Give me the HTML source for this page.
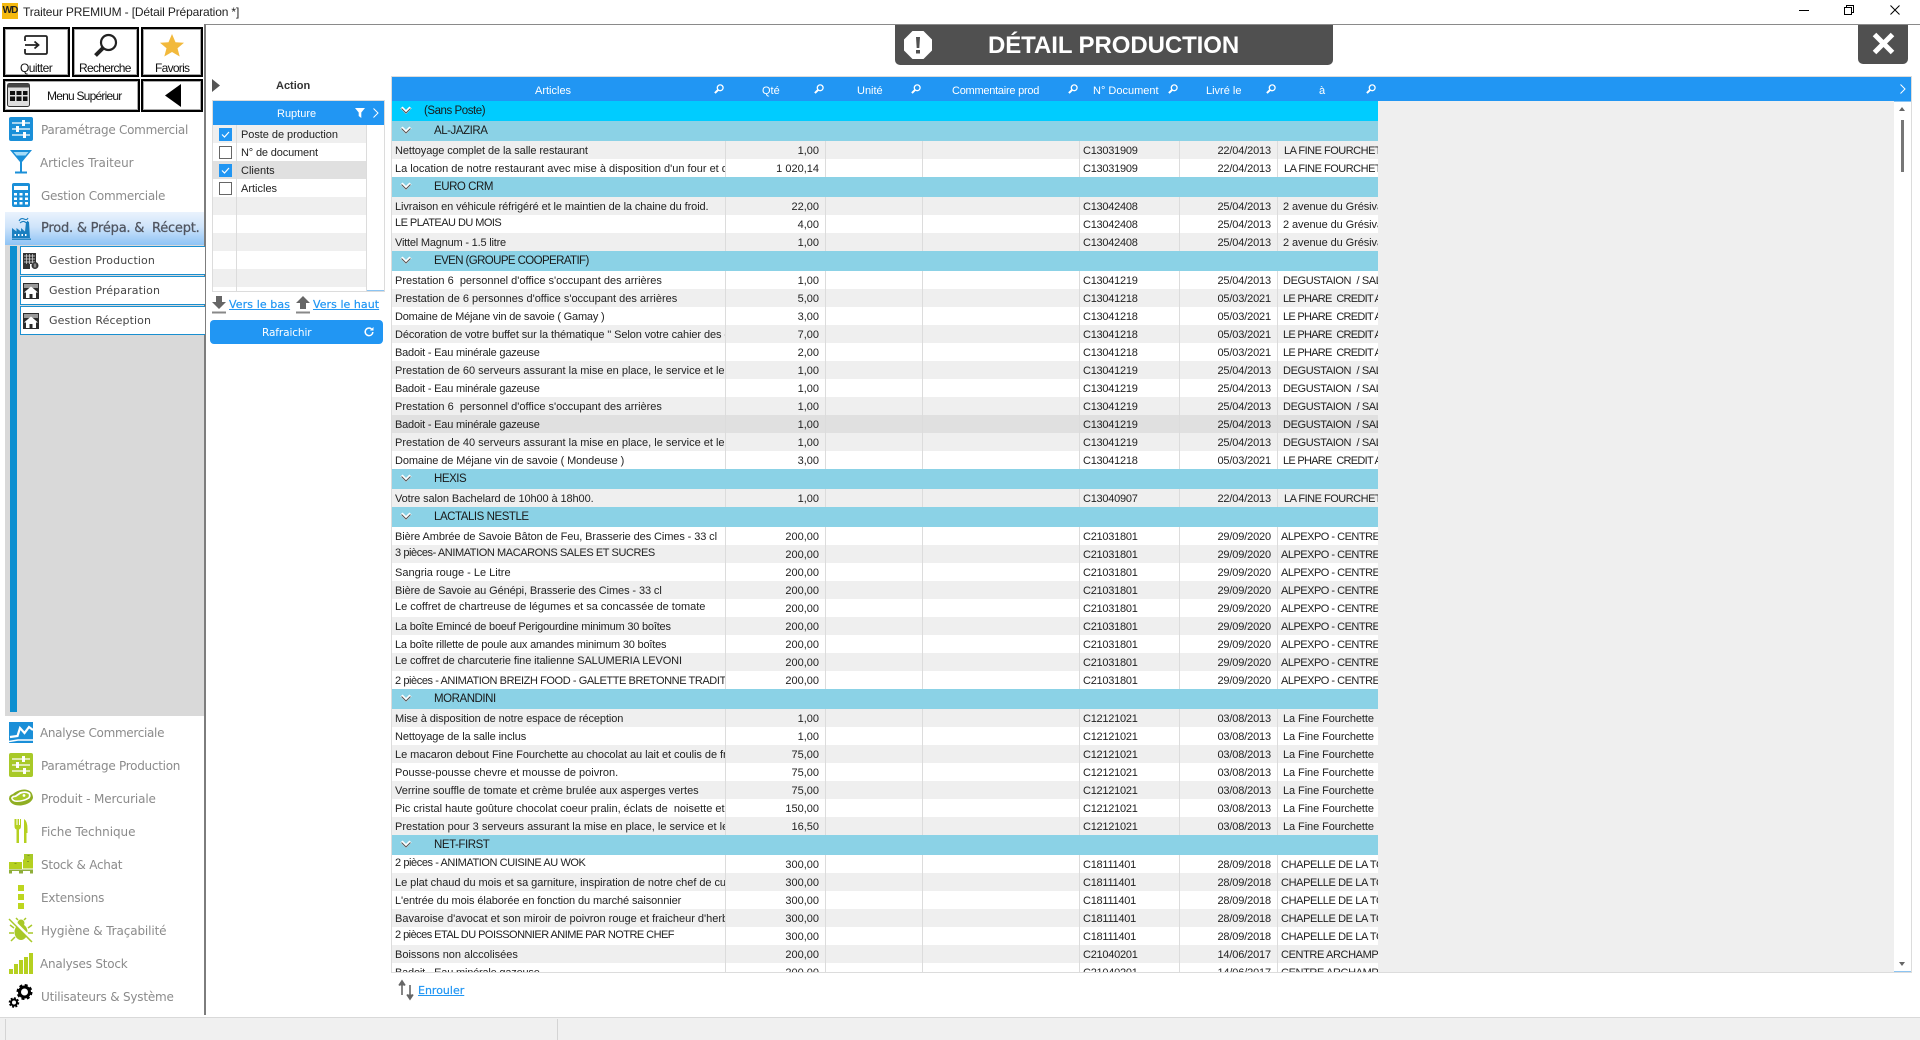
<!DOCTYPE html>
<html lang="fr">
<head>
<meta charset="utf-8">
<title>Traiteur PREMIUM - [Détail Préparation *]</title>
<style>
html,body{margin:0;padding:0;background:#fff;width:1920px;height:1040px;overflow:hidden}
body{position:relative;font-family:"Liberation Sans",sans-serif;font-size:11px;color:#222}
.a{position:absolute}
.t{position:absolute;white-space:pre;line-height:16px}
svg{position:absolute;display:block;overflow:visible}
.btn{position:absolute;box-sizing:border-box;border:2px solid #000;background:#fff;outline:1px solid #aaa;outline-offset:-3px}
.lbl{font-size:12px;color:#111;letter-spacing:-.55px}
.m{position:absolute;left:41px;font-family:"DejaVu Sans",sans-serif;font-size:12px;line-height:18px;color:#8b8b8b;white-space:pre;letter-spacing:-.1px}
.sub{position:absolute;left:20px;width:184px;height:27px;box-sizing:content-box;background:#fff;border:solid #1a8fd0;border-width:1px 0 1px 1px}
.sub span{position:absolute;left:28px;top:6px;font-family:"DejaVu Sans",sans-serif;font-size:11px;line-height:16px;color:#444;white-space:pre;letter-spacing:.1px}
#grid{position:absolute;left:392px;top:101px;width:1502px;height:871px;background:#efefef;overflow:hidden}
.g0,.g1{height:20px;line-height:20px;font-size:11.5px;position:relative;width:986px;white-space:pre;color:#1a1a1a;letter-spacing:-.45px}
.g0{background:#00ccff}
.g1{background:#8bd2e6}
.g0 span{position:absolute;left:32px;top:0}
.g1 span{position:absolute;left:42px;top:0}
.g0 svg,.g1 svg{left:8px;top:5px}
.r{display:flex;height:18px;width:986px;background:#fff;line-height:20px;font-size:11px;color:#222}
.r.s{background:#efefef}
.r.x{background:#e0e0e0}
.r div{box-sizing:border-box;height:18px;overflow:hidden;white-space:pre;border-right:1px solid #dcdcdc}
.c1{width:334px;padding:0 4px 0 3px}
.c2{width:100px;padding-right:6px;text-align:right}
.c3{width:97px}
.c4{width:157px}
.c5{width:100px;padding-left:3px;letter-spacing:-.25px}
.c6{width:98px;padding-right:6px;text-align:right;letter-spacing:-.15px}
.c7{width:100px;padding:0 2px 0 5px;border-right:0!important;letter-spacing:-.5px}
.c7.n{letter-spacing:-.08px}
.c7.d{letter-spacing:-.38px}
.c7.f{letter-spacing:-.72px}
.c7.p3{padding-left:3px}
.c7.p6{padding-left:6px}
.r .u{line-height:16px}
.l0{letter-spacing:-.05px}
.l1{letter-spacing:-.1px}
.l2{letter-spacing:-.2px}
.l3{letter-spacing:-.3px}
.l4{letter-spacing:-.42px}
.l5{letter-spacing:-.54px}
.h{position:absolute;top:83px;color:#fff;font-size:11px;line-height:16px;white-space:pre}
.rl{position:absolute;left:241px;font-size:11px;line-height:20px;white-space:pre;color:#222}
.lk{position:absolute;font-family:"DejaVu Sans",sans-serif;font-size:11px;line-height:15px;color:#2196f3;text-decoration:underline;white-space:pre;-webkit-text-stroke:.2px #2196f3}
</style>
</head>
<body>
<svg width="0" height="0" style="position:absolute">
<defs>
<symbol id="lens" viewBox="0 0 10 10"><circle cx="6.2" cy="3.8" r="2.9" fill="none" stroke="#fff" stroke-width="1.3"/><path d="M4 6 L.9 9.1" stroke="#fff" stroke-width="2"/></symbol>
<symbol id="chev" viewBox="0 0 12 9"><path d="M1.5 1.5 L6 6 L10.5 1.5" fill="none" stroke="#fff" stroke-width="3"/><path d="M1.5 2.5 L6 7 L10.5 2.5" fill="none" stroke="#555" stroke-width="1"/></symbol>
<symbol id="sl" viewBox="0 0 24 24"><path d="M3 6h18M3 12h18M3 18h18" stroke="#fff" stroke-width="1.3"/><path d="M13 3h3v6h-3zM7 9h3v6H7zM14 15h3v6h-3z" fill="#fff"/></symbol>
<symbol id="home" viewBox="0 0 16 16"><rect width="16" height="16" fill="#2c2c2c"/><rect x="1" y="1" width="14" height="4" fill="#9a9a9a"/><path d="M8 3.500 L15 9.500 H13 V15 H9.500 V11 H6.500 V15 H3 V9.500 H1z" fill="#fff"/></symbol>
</defs>
</svg>

<!-- title bar -->
<div class="a" style="left:2px;top:3px;width:16px;height:16px;background:#f5b90f"></div>
<div class="t" style="left:2px;top:4px;width:16px;text-align:center;font-size:10px;font-weight:bold;color:#222;line-height:14px;letter-spacing:-1px">WD</div>
<div class="t" style="left:23px;top:4px;font-size:12px;color:#222;letter-spacing:-.15px">Traiteur PREMIUM - [Détail Préparation *]</div>
<svg style="left:1799px;top:10px" width="10" height="1"><path d="M0 .5H10" stroke="#000"/></svg>
<svg style="left:1844px;top:5px" width="10" height="10"><path d="M2.5 2.5V.5H9.5V7.5H7.5M.5 2.5H7.5V9.5H.5Z" fill="none" stroke="#000"/></svg>
<svg style="left:1890px;top:5px" width="10" height="10"><path d="M.5 .5L9.5 9.5M9.5 .5L.5 9.5" stroke="#000"/></svg>

<!-- frame lines -->
<div class="a" style="left:204px;top:24px;width:1716px;height:1px;background:#8a8a8a"></div>
<div class="a" style="left:204px;top:24px;width:2px;height:991px;background:#7d7d7d"></div>

<!-- top buttons -->
<div class="btn" style="left:3px;top:27px;width:67px;height:50px"></div>
<svg style="left:24px;top:35px" width="24" height="20" viewBox="0 0 24 20"><path d="M1 6V2.5Q1 1 2.5 1H21.500Q23 1 23 2.500V17.500Q23 19 21.500 19H2.500Q1 19 1 17.500V14" fill="none" stroke="#222" stroke-width="1.800"/><path d="M1 10H14M10.500 6.500L14.500 10L10.500 13.500" fill="none" stroke="#222" stroke-width="1.800"/></svg>
<div class="t lbl" style="left:20px;top:60px">Quitter</div>
<div class="btn" style="left:72px;top:27px;width:67px;height:50px"></div>
<svg style="left:93px;top:33px" width="25" height="25" viewBox="0 0 25 25"><circle cx="15.500" cy="9.500" r="7.500" fill="none" stroke="#222" stroke-width="2.200"/><path d="M10 15L2.500 22.500" stroke="#222" stroke-width="4"/></svg>
<div class="t lbl" style="left:79px;top:60px;letter-spacing:-.7px">Recherche</div>
<div class="btn" style="left:141px;top:27px;width:62px;height:50px"></div>
<svg style="left:159px;top:33px" width="26" height="25" viewBox="0 0 26 25"><path d="M13 1L16.500 9.200L25 9.800L18.500 15.200L20.700 23.500L13 19L5.300 23.500L7.500 15.200L1 9.800L9.500 9.200Z" fill="#f2b93c"/></svg>
<div class="t lbl" style="left:155px;top:60px;letter-spacing:-.72px">Favoris</div>
<div class="btn" style="left:3px;top:79px;width:137px;height:33px"></div>
<svg style="left:7px;top:83px" width="23" height="24" viewBox="0 0 23 24"><rect x=".5" y=".5" width="22" height="23" rx="2" fill="#ddd" stroke="#333"/><rect x=".5" y=".5" width="22" height="4" fill="#444"/><path d="M3 8h5v4H3zM9.500 8h5v4h-5zM16 8h4.500v4H16zM3 13.500h5v4.500H3zM9.500 13.500h5v4.500h-5zM16 13.500h4.500v4.500H16z" fill="#111"/></svg>
<div class="t lbl" style="left:47px;top:88px;letter-spacing:-.78px">Menu Supérieur</div>
<div class="btn" style="left:141px;top:79px;width:62px;height:33px"></div>
<svg style="left:165px;top:84px" width="17" height="24"><path d="M16 0V23L0 11.500Z" fill="#000"/></svg>

<!-- sidebar menu -->
<svg style="left:9px;top:117px" width="24" height="24"><rect width="24" height="24" rx="2" fill="#1a8fd8"/><use href="#sl" width="24" height="24"/></svg>
<div class="m" style="top:121px;letter-spacing:-.27px">Paramétrage Commercial</div>
<svg style="left:10px;top:150px" width="22" height="24" viewBox="0 0 22 24"><path d="M0 0H22L12 12V21.500H17V23.500H5V21.500H10V12Z" fill="#1a8fd8"/><path d="M3.500 2H18.500L15.500 5.500H6.500Z" fill="#a5dcf8"/></svg>
<div class="m" style="top:154px;left:40px;letter-spacing:-.05px">Articles Traiteur</div>
<svg style="left:12px;top:183px" width="18" height="24" viewBox="0 0 18 24"><rect width="18" height="24" rx="2" fill="#1a8fd8"/><rect x="2" y="3" width="14" height="4" fill="#fff"/><path d="M2 10h3v2.500H2zM7.500 10h3v2.500h-3zM13 10h3v2.500h-3zM2 14.500h3V17H2zM7.500 14.500h3V17h-3zM13 14.500h3V17h-3zM2 19h3v2.500H2zM7.500 19h3v2.500h-3zM13 19h3v2.500h-3z" fill="#fff"/></svg>
<div class="m" style="top:187px;letter-spacing:-.25px">Gestion Commerciale</div>

<div class="a" style="left:5px;top:212px;width:199px;height:33px;background:linear-gradient(#eaf3fd,#cfe4fa 45%,#8ec3f5)"></div>
<svg style="left:12px;top:216px" width="19" height="24" viewBox="0 0 19 24"><path d="M0 22V12L4.500 15.500V12L9 15.500V12L13 15.500L14 6H17L18 22Z" fill="#1a7fc0"/><path d="M7 5Q9 1.500 12 3T16 2M8 7Q11 4.500 13 6T16 5" fill="none" stroke="#1a7fc0" stroke-width="1.100"/><path d="M2.500 18h1.500v2H2.500zM6 18h1.500v2H6zM9.500 18H11v2H9.500zM13 18h1.500v2H13z" fill="#fff"/><path d="M0 23.200H19" stroke="#1a7fc0" stroke-width="1.400"/></svg>
<div class="m" style="top:220px;color:#505560;font-size:13px;-webkit-text-stroke:.25px #505560;letter-spacing:-.22px;">Prod. &amp; Prépa. &amp;  Récept.</div>

<div class="a" style="left:5px;top:245px;width:199px;height:471px;background:#d9d9d9"></div>
<div class="a" style="left:10px;top:246px;width:7px;height:466px;background:#0d8fd0"></div>
<div class="sub" style="top:246px"><svg style="left:2px;top:6px" width="16" height="16" viewBox="0 0 16 16"><rect width="13" height="11" fill="#333"/><path d="M1 3h11M1 6h11M1 9h11M3.500 1v10M6.500 1v10M9.500 1v10" stroke="#ddd" stroke-width=".7"/><rect y="11" width="7" height="5" fill="#333"/><circle cx="12" cy="12.500" r="3.500" fill="#333"/><path d="M11.200 10.500v4M12.800 10.500v4" stroke="#ccc" stroke-width=".7"/></svg><span>Gestion Production</span></div>
<div class="sub" style="top:276px"><svg style="left:2px;top:6px" width="16" height="16"><use href="#home" width="16" height="16"/></svg><span>Gestion Préparation</span></div>
<div class="sub" style="top:306px"><svg style="left:2px;top:6px" width="16" height="16"><use href="#home" width="16" height="16"/></svg><span>Gestion Réception</span></div>

<svg style="left:9px;top:722px" width="24" height="21" viewBox="0 0 24 21"><rect width="24" height="21" fill="#1a8fd8"/><path d="M1 15L8.500 14L11 6L15.500 11L20 5L24 8" fill="none" stroke="#fff" stroke-width="2.200"/><path d="M0 19.500L9 18H24" fill="none" stroke="#fff" stroke-width="1.500"/></svg>
<div class="m" style="top:724px;left:40px;letter-spacing:-.32px">Analyse Commerciale</div>
<svg style="left:9px;top:753px" width="24" height="24"><rect width="24" height="24" rx="2" fill="#a8c928"/><use href="#sl" width="24" height="24"/></svg>
<div class="m" style="top:757px;letter-spacing:-.27px">Paramétrage Production</div>
<svg style="left:9px;top:789px" width="24" height="17" viewBox="0 0 24 17"><path d="M0 10Q0 6 4 5Q6 3 10 1.500Q17 -1 22 3Q24 6 24 9Q22 15 12 16.500Q2 17 0 10Z" fill="#8fae22"/><path d="M2 9Q3 6.500 6 6.500L11 3Q17 1 21 4Q22.500 7 20.500 9.500Q15 13 8 13Q3 13 2 9Z" fill="#fff"/><path d="M3.500 9Q5 8 7 8L11.500 5Q16 3 19.500 5Q20.500 7 19 8.500Q14 11.500 8 11.500Q4.500 11.500 3.500 9Z" fill="#a8c928"/><circle cx="15" cy="6.500" r="1.400" fill="#fff"/></svg>
<div class="m" style="top:790px;letter-spacing:-.12px">Produit - Mercuriale</div>
<svg style="left:14px;top:819px" width="14" height="24" viewBox="0 0 14 24"><path d="M.5 0V7Q.5 10 2.500 10.500V24H5V10.500Q7 10 7 7V0H6V6H5V0H3.500V6H2.500V0Z" fill="#b5d020"/><path d="M10 24V0Q13.500 2 13.500 10V14H12.500V24Z" fill="#b5d020"/></svg>
<div class="m" style="top:823px;letter-spacing:-.05px">Fiche Technique</div>
<svg style="left:9px;top:854px" width="24" height="20" viewBox="0 0 24 20"><rect x="15" y="0" width="9" height="6" fill="#a8c928"/><rect x="14" y="5.500" width="10" height="9" fill="#b5d020"/><rect x="0" y="8" width="13" height="7" fill="#b5d020"/><rect x="0" y="15.500" width="24" height="1.500" fill="#8fae3a"/><path d="M0 17h3v2.500H0zM10 17h4v2.500h-4zM21 17h3v2.500h-3z" fill="#8fae3a"/><path d="M5.500 9h2v1h-2zM18 7h2v1h-2zM18.500 1h2v1h-2z" fill="#7f9a20"/></svg>
<div class="m" style="top:856px;letter-spacing:-.25px">Stock &amp; Achat</div>
<div class="a" style="left:18px;top:885px;width:6px;height:6px;background:#bdd61f"></div>
<div class="a" style="left:18px;top:894px;width:6px;height:6px;background:#bdd61f"></div>
<div class="a" style="left:18px;top:903px;width:6px;height:6px;background:#bdd61f"></div>
<div class="m" style="top:889px;letter-spacing:-.2px">Extensions</div>
<svg style="left:9px;top:918px" width="24" height="24" viewBox="0 0 24 24"><ellipse cx="12" cy="14" rx="6.500" ry="8" fill="#a8c928"/><circle cx="12" cy="5" r="3.500" fill="#a8c928"/><path d="M5 10L1 7M5 15H0M6 19L2 23M19 10L23 7M19 15H24M18 19L22 23M9 2L7 0M15 2L17 0" stroke="#a8c928" stroke-width="1.500"/><path d="M1 0L24 23" stroke="#fff" stroke-width="3.500"/><path d="M0 1L23 24" stroke="#a8c928" stroke-width="1.500"/></svg>
<div class="m" style="top:922px;letter-spacing:-.12px">Hygiène &amp; Traçabilité</div>
<svg style="left:9px;top:953px" width="24" height="21"><path d="M0 16h4v5H0zM5 11h4v10H5zM10 7h4v14h-4zM15 4h4v17h-4zM20 0h4v21h-4z" fill="#b5d020"/></svg>
<div class="m" style="top:955px;left:40px;letter-spacing:-.22px">Analyses Stock</div>
<svg style="left:9px;top:984px" width="24" height="24" viewBox="0 0 24 24"><circle cx="15.500" cy="8" r="5" fill="none" stroke="#000" stroke-width="3"/><circle cx="15.500" cy="8" r="7" fill="none" stroke="#000" stroke-width="2" stroke-dasharray="3 2.500"/><circle cx="5" cy="18.500" r="3" fill="none" stroke="#000" stroke-width="2"/><circle cx="5" cy="18.500" r="4.500" fill="none" stroke="#000" stroke-width="1.500" stroke-dasharray="2 1.500"/></svg>
<div class="m" style="top:988px;letter-spacing:-.2px">Utilisateurs &amp; Système</div>

<!-- title banner -->
<div class="a" style="left:895px;top:25px;width:438px;height:40px;background:#505050;border-radius:0 0 5px 5px"></div>
<svg style="left:904px;top:31px" width="28" height="28" viewBox="0 0 28 28"><path d="M8.500 0H19.500L28 8.500V19.500L19.500 28H8.500L0 19.500V8.500Z" fill="#fff"/><path d="M12 6H16L15.300 17H12.700Z" fill="#505050"/><rect x="12" y="19" width="4" height="3.500" fill="#505050"/></svg>
<div class="t" style="left:988px;top:31px;color:#fff;font-weight:bold;font-size:24px;line-height:29px;letter-spacing:-.08px">DÉTAIL PRODUCTION</div>
<div class="a" style="left:1858px;top:25px;width:50px;height:39px;background:#505050;border-radius:0 0 5px 5px"></div>
<svg style="left:1872px;top:32px" width="23" height="23"><path d="M2.500 2.500L20.500 20.500M20.500 2.500L2.500 20.500" stroke="#fff" stroke-width="5"/></svg>

<!-- action panel -->
<svg style="left:212px;top:79px" width="8" height="13"><path d="M0 0L8 6.500L0 13Z" fill="#555"/></svg>
<div class="t" style="left:276px;top:78px;font-weight:bold;font-size:11px;color:#333">Action</div>
<div class="a" style="left:212px;top:100px;width:173px;height:192px;box-sizing:border-box;border:1px solid #dcdcdc;background:#fff"></div>
<div class="a" style="left:213px;top:101px;width:171px;height:24px;background:#2196f3"></div>
<div class="t" style="left:277px;top:106px;color:#fff;font-size:11px">Rupture</div>
<svg style="left:355px;top:108px" width="10" height="10"><path d="M0 0H10L6.300 4.500V10L3.700 8V4.500Z" fill="#fff"/></svg>
<svg style="left:373px;top:108px" width="6" height="10"><path d="M.5 .5L5 5L.5 9.500" fill="none" stroke="#fff"/></svg>
<div class="a" style="left:213px;top:125px;width:153px;height:18px;background:#efefef"></div>
<div class="a" style="left:213px;top:161px;width:153px;height:18px;background:#e0e0e0"></div>
<div class="a" style="left:213px;top:197px;width:153px;height:18px;background:#efefef"></div>
<div class="a" style="left:213px;top:233px;width:153px;height:18px;background:#efefef"></div>
<div class="a" style="left:213px;top:269px;width:153px;height:18px;background:#efefef"></div>
<div class="a" style="left:236px;top:125px;width:1px;height:166px;background:#dcdcdc"></div>
<div class="a" style="left:366px;top:125px;width:1px;height:166px;background:#dcdcdc"></div>
<div class="a" style="left:367px;top:290px;width:17px;height:1px;background:#8cc4f2"></div>
<div class="a" style="left:219px;top:128px;width:13px;height:13px;background:#2196f3"></div>
<svg style="left:219px;top:128px" width="13" height="13"><path d="M3 6.500L5.500 9L10 4" fill="none" stroke="#fff" stroke-width="1.200"/></svg>
<div class="a" style="left:219px;top:146px;width:13px;height:13px;box-sizing:border-box;border:1px solid #666;background:#fff"></div>
<div class="a" style="left:219px;top:164px;width:13px;height:13px;background:#2196f3"></div>
<svg style="left:219px;top:164px" width="13" height="13"><path d="M3 6.500L5.500 9L10 4" fill="none" stroke="#fff" stroke-width="1.200"/></svg>
<div class="a" style="left:219px;top:182px;width:13px;height:13px;box-sizing:border-box;border:1px solid #666;background:#fff"></div>
<div class="rl" style="top:125px;letter-spacing:-.05px">Poste de production</div>
<div class="rl" style="top:143px;letter-spacing:-.15px">N° de document</div>
<div class="rl" style="top:161px">Clients</div>
<div class="rl" style="top:179px">Articles</div>

<svg style="left:212px;top:296px" width="14" height="18" viewBox="0 0 14 18"><path d="M4 0H10V6H14L7 13L0 6H4Z" fill="#666"/><rect y="15.500" width="14" height="2" fill="#888"/></svg>
<div class="lk" style="left:229px;top:297px;letter-spacing:.1px">Vers le bas</div>
<svg style="left:296px;top:296px" width="14" height="18" viewBox="0 0 14 18"><path d="M4 13H10V7H14L7 0L0 7H4Z" fill="#666"/><rect y="15.500" width="14" height="2" fill="#888"/></svg>
<div class="lk" style="left:313px;top:297px;letter-spacing:.05px">Vers le haut</div>
<div class="a" style="left:210px;top:320px;width:173px;height:24px;border-radius:4px;background:#2196f3"></div>
<div class="t" style="left:262px;top:325px;color:#fff;font-family:'DejaVu Sans',sans-serif;font-size:10.5px;letter-spacing:-.1px">Rafraichir</div>
<svg style="left:364px;top:327px" width="10" height="10" viewBox="0 0 10 10"><path d="M8.800 5A3.800 3.800 0 1 1 7.500 2" fill="none" stroke="#fff" stroke-width="1.500"/><path d="M6 3.500H9.500V0Z" fill="#fff"/></svg>

<!-- grid frame -->
<div class="a" style="left:391px;top:76px;width:1521px;height:897px;box-sizing:border-box;border:1px solid #dcdcdc;background:#fff"></div>
<div class="a" style="left:392px;top:77px;width:1519px;height:24px;background:#2196f3"></div>
<div class="h" style="left:535px">Articles</div>
<div class="h" style="left:762px">Qté</div>
<div class="h" style="left:857px">Unité</div>
<div class="h" style="left:952px;letter-spacing:-.25px">Commentaire prod</div>
<div class="h" style="left:1093px">N° Document</div>
<div class="h" style="left:1206px">Livré le</div>
<div class="h" style="left:1319px">à</div>
<svg style="left:714px;top:84px" width="10" height="10"><use href="#lens" width="10" height="10"/></svg>
<svg style="left:814px;top:84px" width="10" height="10"><use href="#lens" width="10" height="10"/></svg>
<svg style="left:911px;top:84px" width="10" height="10"><use href="#lens" width="10" height="10"/></svg>
<svg style="left:1068px;top:84px" width="10" height="10"><use href="#lens" width="10" height="10"/></svg>
<svg style="left:1168px;top:84px" width="10" height="10"><use href="#lens" width="10" height="10"/></svg>
<svg style="left:1266px;top:84px" width="10" height="10"><use href="#lens" width="10" height="10"/></svg>
<svg style="left:1366px;top:84px" width="10" height="10"><use href="#lens" width="10" height="10"/></svg>
<svg style="left:1900px;top:84px" width="6" height="10"><path d="M.5 .5L5 5L.5 9.500" fill="none" stroke="#fff"/></svg>

<!-- scrollbar -->
<div class="a" style="left:1894px;top:101px;width:17px;height:1px;background:#8cc4f2"></div>
<svg style="left:1899px;top:107px" width="6" height="4"><path d="M3 0L6 4H0Z" fill="#666"/></svg>
<div class="a" style="left:1901px;top:120px;width:3px;height:52px;background:#777"></div>
<svg style="left:1899px;top:962px" width="6" height="4"><path d="M0 0H6L3 4Z" fill="#666"/></svg>
<div class="a" style="left:1894px;top:971px;width:17px;height:1px;background:#8cc4f2"></div>

<div id="grid">
<div class="g0"><svg width="12" height="9"><use href="#chev" width="12" height="9"/></svg><span>(Sans Poste)</span></div>
<div class="g1"><svg width="12" height="9"><use href="#chev" width="12" height="9"/></svg><span>AL-JAZIRA</span></div>
<div class="r s"><div class="c1 l1">Nettoyage complet de la salle restaurant</div><div class="c2">1,00</div><div class="c3"></div><div class="c4"></div><div class="c5">C13031909</div><div class="c6">22/04/2013</div><div class="c7 p6">LA FINE FOURCHETTE</div></div>
<div class="r"><div class="c1">La location de notre restaurant avec mise à disposition d'un four et de</div><div class="c2">1 020,14</div><div class="c3"></div><div class="c4"></div><div class="c5">C13031909</div><div class="c6">22/04/2013</div><div class="c7 p6">LA FINE FOURCHETTE</div></div>
<div class="g1"><svg width="12" height="9"><use href="#chev" width="12" height="9"/></svg><span>EURO CRM</span></div>
<div class="r s"><div class="c1 l1">Livraison en véhicule réfrigéré et le maintien de la chaine du froid.</div><div class="c2">22,00</div><div class="c3"></div><div class="c4"></div><div class="c5">C13042408</div><div class="c6">25/04/2013</div><div class="c7 n">2 avenue du Grésivaudan</div></div>
<div class="r"><div class="c1 u l5">LE PLATEAU DU MOIS</div><div class="c2">4,00</div><div class="c3"></div><div class="c4"></div><div class="c5">C13042408</div><div class="c6">25/04/2013</div><div class="c7 n">2 avenue du Grésivaudan</div></div>
<div class="r s"><div class="c1 l2">Vittel Magnum - 1.5 litre</div><div class="c2">1,00</div><div class="c3"></div><div class="c4"></div><div class="c5">C13042408</div><div class="c6">25/04/2013</div><div class="c7 n">2 avenue du Grésivaudan</div></div>
<div class="g1"><svg width="12" height="9"><use href="#chev" width="12" height="9"/></svg><span style="letter-spacing:-.6px">EVEN (GROUPE COOPERATIF)</span></div>
<div class="r"><div class="c1">Prestation 6  personnel d'office s'occupant des arrières</div><div class="c2">1,00</div><div class="c3"></div><div class="c4"></div><div class="c5">C13041219</div><div class="c6">25/04/2013</div><div class="c7 d">DEGUSTAION  / SALON</div></div>
<div class="r s"><div class="c1">Prestation de 6 personnes d'office s'occupant des arrières</div><div class="c2">5,00</div><div class="c3"></div><div class="c4"></div><div class="c5">C13041218</div><div class="c6">05/03/2021</div><div class="c7 f">LE PHARE  CREDIT AGRICOLE</div></div>
<div class="r"><div class="c1 l2">Domaine de Méjane vin de savoie ( Gamay )</div><div class="c2">3,00</div><div class="c3"></div><div class="c4"></div><div class="c5">C13041218</div><div class="c6">05/03/2021</div><div class="c7 f">LE PHARE  CREDIT AGRICOLE</div></div>
<div class="r s"><div class="c1 l1">Décoration de votre buffet sur la thématique " Selon votre cahier des charges</div><div class="c2">7,00</div><div class="c3"></div><div class="c4"></div><div class="c5">C13041218</div><div class="c6">05/03/2021</div><div class="c7 f">LE PHARE  CREDIT AGRICOLE</div></div>
<div class="r"><div class="c1 l2">Badoit - Eau minérale gazeuse</div><div class="c2">2,00</div><div class="c3"></div><div class="c4"></div><div class="c5">C13041218</div><div class="c6">05/03/2021</div><div class="c7 f">LE PHARE  CREDIT AGRICOLE</div></div>
<div class="r s"><div class="c1">Prestation de 60 serveurs assurant la mise en place, le service et le</div><div class="c2">1,00</div><div class="c3"></div><div class="c4"></div><div class="c5">C13041219</div><div class="c6">25/04/2013</div><div class="c7 d">DEGUSTAION  / SALON</div></div>
<div class="r"><div class="c1 l2">Badoit - Eau minérale gazeuse</div><div class="c2">1,00</div><div class="c3"></div><div class="c4"></div><div class="c5">C13041219</div><div class="c6">25/04/2013</div><div class="c7 d">DEGUSTAION  / SALON</div></div>
<div class="r s"><div class="c1">Prestation 6  personnel d'office s'occupant des arrières</div><div class="c2">1,00</div><div class="c3"></div><div class="c4"></div><div class="c5">C13041219</div><div class="c6">25/04/2013</div><div class="c7 d">DEGUSTAION  / SALON</div></div>
<div class="r x"><div class="c1 l2">Badoit - Eau minérale gazeuse</div><div class="c2">1,00</div><div class="c3"></div><div class="c4"></div><div class="c5">C13041219</div><div class="c6">25/04/2013</div><div class="c7 d">DEGUSTAION  / SALON</div></div>
<div class="r s"><div class="c1">Prestation de 40 serveurs assurant la mise en place, le service et le</div><div class="c2">1,00</div><div class="c3"></div><div class="c4"></div><div class="c5">C13041219</div><div class="c6">25/04/2013</div><div class="c7 d">DEGUSTAION  / SALON</div></div>
<div class="r"><div class="c1 l1">Domaine de Méjane vin de savoie ( Mondeuse )</div><div class="c2">3,00</div><div class="c3"></div><div class="c4"></div><div class="c5">C13041218</div><div class="c6">05/03/2021</div><div class="c7 f">LE PHARE  CREDIT AGRICOLE</div></div>
<div class="g1"><svg width="12" height="9"><use href="#chev" width="12" height="9"/></svg><span>HEXIS</span></div>
<div class="r s"><div class="c1 l1">Votre salon Bachelard de 10h00 à 18h00.</div><div class="c2">1,00</div><div class="c3"></div><div class="c4"></div><div class="c5">C13040907</div><div class="c6">22/04/2013</div><div class="c7 p6">LA FINE FOURCHETTE</div></div>
<div class="g1"><svg width="12" height="9"><use href="#chev" width="12" height="9"/></svg><span>LACTALIS NESTLE</span></div>
<div class="r"><div class="c1 l1">Bière Ambrée de Savoie Bâton de Feu, Brasserie des Cimes - 33 cl</div><div class="c2">200,00</div><div class="c3"></div><div class="c4"></div><div class="c5">C21031801</div><div class="c6">29/09/2020</div><div class="c7 p3">ALPEXPO - CENTRE</div></div>
<div class="r s"><div class="c1 u l4">3 pièces- ANIMATION MACARONS SALES ET SUCRES</div><div class="c2">200,00</div><div class="c3"></div><div class="c4"></div><div class="c5">C21031801</div><div class="c6">29/09/2020</div><div class="c7 p3">ALPEXPO - CENTRE</div></div>
<div class="r"><div class="c1">Sangria rouge - Le Litre</div><div class="c2">200,00</div><div class="c3"></div><div class="c4"></div><div class="c5">C21031801</div><div class="c6">29/09/2020</div><div class="c7 p3">ALPEXPO - CENTRE</div></div>
<div class="r s"><div class="c1 l1">Bière de Savoie au Génépi, Brasserie des Cimes - 33 cl</div><div class="c2">200,00</div><div class="c3"></div><div class="c4"></div><div class="c5">C21031801</div><div class="c6">29/09/2020</div><div class="c7 p3">ALPEXPO - CENTRE</div></div>
<div class="r"><div class="c1 u">Le coffret de chartreuse de légumes et sa concassée de tomate</div><div class="c2">200,00</div><div class="c3"></div><div class="c4"></div><div class="c5">C21031801</div><div class="c6">29/09/2020</div><div class="c7 p3">ALPEXPO - CENTRE</div></div>
<div class="r s"><div class="c1 l2">La boîte Emincé de boeuf Perigourdine minimum 30 boîtes</div><div class="c2">200,00</div><div class="c3"></div><div class="c4"></div><div class="c5">C21031801</div><div class="c6">29/09/2020</div><div class="c7 p3">ALPEXPO - CENTRE</div></div>
<div class="r"><div class="c1 l2">La boîte rillette de poule aux amandes minimum 30 boîtes</div><div class="c2">200,00</div><div class="c3"></div><div class="c4"></div><div class="c5">C21031801</div><div class="c6">29/09/2020</div><div class="c7 p3">ALPEXPO - CENTRE</div></div>
<div class="r s"><div class="c1 u l1">Le coffret de charcuterie fine italienne SALUMERIA LEVONI</div><div class="c2">200,00</div><div class="c3"></div><div class="c4"></div><div class="c5">C21031801</div><div class="c6">29/09/2020</div><div class="c7 p3">ALPEXPO - CENTRE</div></div>
<div class="r"><div class="c1 l4">2 pièces - ANIMATION BREIZH FOOD - GALETTE BRETONNE TRADITION</div><div class="c2">200,00</div><div class="c3"></div><div class="c4"></div><div class="c5">C21031801</div><div class="c6">29/09/2020</div><div class="c7 p3">ALPEXPO - CENTRE</div></div>
<div class="g1"><svg width="12" height="9"><use href="#chev" width="12" height="9"/></svg><span>MORANDINI</span></div>
<div class="r s"><div class="c1 l1">Mise à disposition de notre espace de réception</div><div class="c2">1,00</div><div class="c3"></div><div class="c4"></div><div class="c5">C12121021</div><div class="c6">03/08/2013</div><div class="c7 n">La Fine Fourchette</div></div>
<div class="r"><div class="c1 l1">Nettoyage de la salle inclus</div><div class="c2">1,00</div><div class="c3"></div><div class="c4"></div><div class="c5">C12121021</div><div class="c6">03/08/2013</div><div class="c7 n">La Fine Fourchette</div></div>
<div class="r s"><div class="c1 l0">Le macaron debout Fine Fourchette au chocolat au lait et coulis de fruits</div><div class="c2">75,00</div><div class="c3"></div><div class="c4"></div><div class="c5">C12121021</div><div class="c6">03/08/2013</div><div class="c7 n">La Fine Fourchette</div></div>
<div class="r"><div class="c1">Pousse-pousse chevre et mousse de poivron.</div><div class="c2">75,00</div><div class="c3"></div><div class="c4"></div><div class="c5">C12121021</div><div class="c6">03/08/2013</div><div class="c7 n">La Fine Fourchette</div></div>
<div class="r s"><div class="c1">Verrine souffle de tomate et crème brulée aux asperges vertes</div><div class="c2">75,00</div><div class="c3"></div><div class="c4"></div><div class="c5">C12121021</div><div class="c6">03/08/2013</div><div class="c7 n">La Fine Fourchette</div></div>
<div class="r"><div class="c1">Pic cristal haute goûture chocolat coeur pralin, éclats de  noisette et</div><div class="c2">150,00</div><div class="c3"></div><div class="c4"></div><div class="c5">C12121021</div><div class="c6">03/08/2013</div><div class="c7 n">La Fine Fourchette</div></div>
<div class="r s"><div class="c1">Prestation pour 3 serveurs assurant la mise en place, le service et le</div><div class="c2">16,50</div><div class="c3"></div><div class="c4"></div><div class="c5">C12121021</div><div class="c6">03/08/2013</div><div class="c7 n">La Fine Fourchette</div></div>
<div class="g1"><svg width="12" height="9"><use href="#chev" width="12" height="9"/></svg><span>NET-FIRST</span></div>
<div class="r"><div class="c1 u l4">2 pièces - ANIMATION CUISINE AU WOK</div><div class="c2">300,00</div><div class="c3"></div><div class="c4"></div><div class="c5">C18111401</div><div class="c6">28/09/2018</div><div class="c7 d p3">CHAPELLE DE LA TOUR</div></div>
<div class="r s"><div class="c1 l0">Le plat chaud du mois et sa garniture, inspiration de notre chef de cuisine</div><div class="c2">300,00</div><div class="c3"></div><div class="c4"></div><div class="c5">C18111401</div><div class="c6">28/09/2018</div><div class="c7 d p3">CHAPELLE DE LA TOUR</div></div>
<div class="r"><div class="c1 l1">L'entrée du mois élaborée en fonction du marché saisonnier</div><div class="c2">300,00</div><div class="c3"></div><div class="c4"></div><div class="c5">C18111401</div><div class="c6">28/09/2018</div><div class="c7 d p3">CHAPELLE DE LA TOUR</div></div>
<div class="r s"><div class="c1">Bavaroise d'avocat et son miroir de poivron rouge et fraicheur d'herbes</div><div class="c2">300,00</div><div class="c3"></div><div class="c4"></div><div class="c5">C18111401</div><div class="c6">28/09/2018</div><div class="c7 d p3">CHAPELLE DE LA TOUR</div></div>
<div class="r"><div class="c1 u l5">2 pièces ETAL DU POISSONNIER ANIME PAR NOTRE CHEF</div><div class="c2">300,00</div><div class="c3"></div><div class="c4"></div><div class="c5">C18111401</div><div class="c6">28/09/2018</div><div class="c7 d p3">CHAPELLE DE LA TOUR</div></div>
<div class="r s"><div class="c1">Boissons non alccolisées</div><div class="c2">200,00</div><div class="c3"></div><div class="c4"></div><div class="c5">C21040201</div><div class="c6">14/06/2017</div><div class="c7 d p3">CENTRE ARCHAMPS</div></div>
<div class="r"><div class="c1 l2">Badoit - Eau minérale gazeuse</div><div class="c2">200,00</div><div class="c3"></div><div class="c4"></div><div class="c5">C21040201</div><div class="c6">14/06/2017</div><div class="c7 d p3">CENTRE ARCHAMPS</div></div>
</div>

<!-- enrouler -->
<svg style="left:398px;top:980px" width="16" height="20" viewBox="0 0 16 20"><path d="M4 15V3M1 5.500L4 1L7 5.500M12 5V17M9 14.500L12 19L15 14.500" fill="#666" stroke="#666" stroke-width="1.600"/></svg>
<div class="lk" style="left:418px;top:983px">Enrouler</div>

<!-- status bar -->
<div class="a" style="left:0;top:1017px;width:1920px;height:23px;background:#f0f0f0;border-top:1px solid #d9d9d9;box-sizing:border-box"></div>
<div class="a" style="left:5px;top:1019px;width:1px;height:21px;background:#d4d4d4"></div>
<div class="a" style="left:557px;top:1019px;width:1px;height:21px;background:#d4d4d4"></div>
</body>
</html>
